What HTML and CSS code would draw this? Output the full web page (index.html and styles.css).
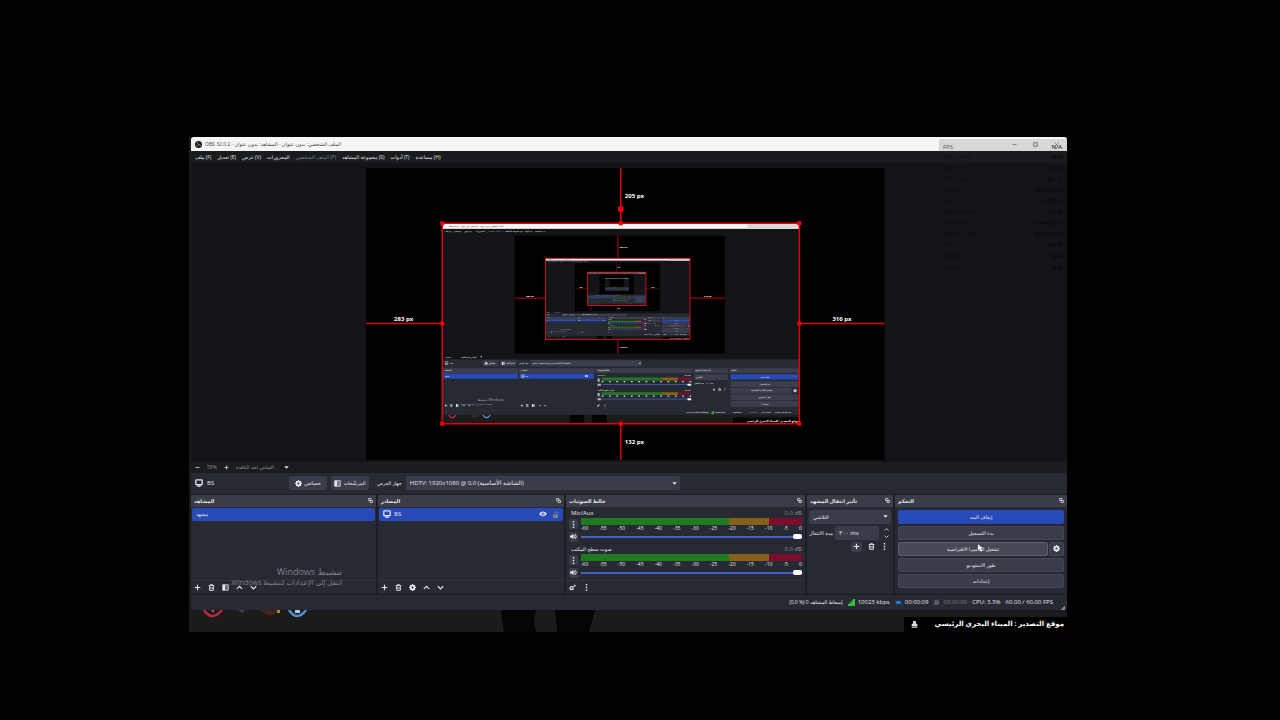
FILE: index.html
```html
<!DOCTYPE html>
<html lang="ar">
<head>
    <meta charset="UTF-8">
    <meta name="viewport" content="width=device-width, initial-scale=1.0">
    <title>OBS 32.0.2</title>
    <link rel="stylesheet" href="styles.css">
</head>
<body>

    <!-- Shared icons -->
    <svg class="defs" width="0" height="0" aria-hidden="true">
        <defs>
            <symbol id="i-plus" viewBox="0 0 10 10"><path d="M5 1v8M1 5h8" stroke="currentColor" stroke-width="1.6"/></symbol>
            <symbol id="i-minus" viewBox="0 0 10 10"><path d="M1 5h8" stroke="currentColor" stroke-width="1.6"/></symbol>
            <symbol id="i-trash" viewBox="0 0 10 10"><path d="M1 2.2h8M3.6 2V.8h2.8V2M2 2.4l.3 6.8h5.4L8 2.4M4 4v3.6M6 4v3.6" fill="none" stroke="currentColor" stroke-width="1.2"/></symbol>
            <symbol id="i-filter" viewBox="0 0 10 10"><path d="M1 1h8v8H1z" fill="none" stroke="currentColor"/><path d="M5 1h4v8H5z" fill="currentColor" opacity=".35"/><path d="M1 1h3.6v8H1z" fill="currentColor"/></symbol>
            <symbol id="i-up" viewBox="0 0 10 10"><path d="M1.2 7L5 3.2 8.8 7" fill="none" stroke="currentColor" stroke-width="1.6"/></symbol>
            <symbol id="i-down" viewBox="0 0 10 10"><path d="M1.2 3.2L5 7l3.8-3.8" fill="none" stroke="currentColor" stroke-width="1.6"/></symbol>
            <symbol id="i-gear" viewBox="0 0 10 10"><circle cx="5" cy="5" r="2.8" fill="none" stroke="currentColor" stroke-width="2.6"/><path d="M5 0v2M5 8v2M0 5h2M8 5h2M1.5 1.5l1.4 1.4M7.1 7.1l1.4 1.4M1.5 8.5l1.4-1.4M7.1 2.9l1.4-1.4" stroke="currentColor" stroke-width="1.6"/></symbol>
            <symbol id="i-dots" viewBox="0 0 10 10"><path d="M4 0h2v2H4zM4 4h2v2H4zM4 8h2v2H4z" fill="currentColor"/></symbol>
            <symbol id="i-tri" viewBox="0 0 10 10"><path d="M.5 2.5h9L5 7.5z" fill="currentColor"/></symbol>
            <symbol id="i-monitor" viewBox="0 0 10 10"><rect x="1" y="1.2" width="8" height="6" rx="1" fill="none" stroke="currentColor" stroke-width="1.6"/><path d="M3 9h4" stroke="currentColor" stroke-width="1.6"/></symbol>
            <symbol id="i-eye" viewBox="0 0 10 10"><path d="M0 5Q5-1 10 5 5 11 0 5z" fill="currentColor"/><circle cx="5" cy="5" r="2" fill="#284ab8"/><circle cx="5" cy="5" r="1" fill="currentColor"/></symbol>
            <symbol id="i-lock" viewBox="0 0 10 10"><rect x="1.5" y="5" width="7" height="5" fill="currentColor"/><path d="M4 5V3a2 2 0 0 1 4 0v2" fill="none" stroke="currentColor" stroke-width="1.2"/></symbol>
            <symbol id="i-float" viewBox="0 0 10 10"><path d="M1 1h5v4H1zM4 5h5v4H4z" fill="none" stroke="currentColor" stroke-width="1.4"/></symbol>
            <symbol id="i-speaker" viewBox="0 0 10 10"><path d="M0 3.5h2L5 1v8L2 6.5H0z" fill="currentColor"/><path d="M6 3q1.6 2 0 4M7.5 1.5q3 3.5 0 7" fill="none" stroke="currentColor" stroke-width="1.2"/></symbol>
            <symbol id="i-gears" viewBox="0 0 10 10"><circle cx="3.8" cy="6" r="2.2" fill="none" stroke="currentColor" stroke-width="1.8"/><circle cx="8" cy="2.5" r="1" fill="none" stroke="currentColor" stroke-width="1.4"/></symbol>

            <!-- One captured desktop, reused for every level of the mirror -->
            <symbol id="desk" viewBox="0 0 878 495" preserveAspectRatio="none">
                <rect width="878" height="495" fill="#1b1b1b"/>
                <path d="M314 473h35v22h-35zM368 473h36v22h-36z" fill="#000"/>
                <g fill="none" stroke-width="3"><path d="M16 473q9 14 18 0" stroke="#c22a45"/><path d="M100 473q9 14 18 0" stroke="#5a92dc"/><path d="M73 476h16" stroke="#6b2e1a"/></g>
                <rect x="1" width="877" height="473" fill="#272a33"/>
                <rect x="1" y="14" width="877" height="322" fill="#121418"/>
                <rect x="1" width="877" height="14" fill="#f4f4f4"/>
                <rect x="750" y="2" width="126" height="12" fill="#d8d8d8"/>
                <rect x="178" y="31" width="517" height="291" fill="#000"/>
                <g fill="#3c3f4b">
                    <path d="M100 338h38v15h-38zM142 338h40v15h-40zM217 338h274v15H217z"/>
                    <path d="M2 358h185v12H2zM189 358h185v12H189zM377 358h238v12H377zM618 358h85v12h-85zM706 358h171v12H706z"/>
                    <path d="M709 390h166v14H709zM709 406h150v14H709zM709 423h166v14H709zM709 439h166v14H709zM620 373h82v14h-82z"/>
                </g>
                <path d="M3 371h183v13H3zM190 371h183v13H190zM709 373h166v13H709z" fill="#284ab8"/>
                <g id="desk-meter">
                    <path d="M392 381h148v7H392z" fill="#1f7a22"/><path d="M540 381h40v7h-40z" fill="#84601a"/><path d="M580 381h32v7h-32z" fill="#7a0d2b"/>
                    <path d="M392 391h220" stroke="#ddd" stroke-width="3" stroke-dasharray="4 14"/>
                    <path d="M392 398h220" stroke="#405fc4" stroke-width="2"/><path d="M603 396h9v5h-9z" fill="#fff"/>
                    <path d="M382 383h5v8h-5zM382 396h8v5h-8z" fill="#bbb"/>
                </g>
                <use href="#desk-meter" y="36"/>
                <g color="#fff">
                    <use href="#i-monitor" x="6" y="341" width="9" height="9"/><use href="#i-monitor" x="194" y="373" width="9" height="9"/>
                    <use href="#i-gear" x="104" y="342" width="8" height="8"/><use href="#i-filter" x="146" y="342" width="8" height="8"/>
                    <use href="#i-eye" x="350" y="373" width="9" height="9"/><use href="#i-gear" x="863" y="409" width="9" height="9"/>
                    <g id="desk-tools"><use href="#i-plus" x="5" y="446" width="8" height="8"/><use href="#i-trash" x="18" y="446" width="8" height="8"/><use href="#i-filter" x="33" y="446" width="8" height="8"/><use href="#i-up" x="49" y="446" width="8" height="8"/><use href="#i-down" x="62" y="446" width="8" height="8"/></g>
                    <use href="#desk-tools" x="187"/>
                    <use href="#i-gears" x="380" y="446" width="8" height="8"/><use href="#i-dots" x="396" y="446" width="8" height="8"/>
                    <use href="#i-plus" x="664" y="407" width="8" height="8"/><use href="#i-trash" x="678" y="407" width="8" height="8"/><use href="#i-dots" x="691" y="407" width="8" height="8"/>
                    <use href="#i-tri" x="483" y="343" width="6" height="6"/><use href="#i-tri" x="93" y="327" width="6" height="6"/>
                </g>
                <g class="mini-text">
                    <text x="16" y="9" fill="#333">OBS 32.0.2 - الملف الشخصي: بدون عنوان - المشاهد: بدون عنوان</text>
                    <text x="6" y="23">ملف (F)</text><text x="28" y="23">تعديل (E)</text><text x="54" y="23">عرض (V)</text><text x="82" y="23">المحزورات</text><text x="110" y="23" opacity=".5">الملف الشخصي (P)</text><text x="155" y="23">مجموعة المشاهد (S)</text><text x="202" y="23">أدوات (T)</text><text x="228" y="23">مساعدة (H)</text>
                    <text x="20" y="348">BS</text><text x="114" y="348">خصائص</text><text x="156" y="348">المرشّحات</text><text x="188" y="348">جهاز العرض</text>
                    <text x="221" y="348">HDTV: 1920x1080 @ 0,0 (الشاشة الأساسية)</text>
                    <text x="6" y="332">−  58%  +</text><text x="46" y="332">القياس لحد النافذة</text>
                    <text x="6" y="366">المشاهد</text><text x="193" y="366">المصادر</text><text x="381" y="366">خالط الصوتيات</text><text x="622" y="366">تأثير انتقال المشهد</text><text x="710" y="366">التحكم</text>
                    <text x="6" y="380">مشهد</text><text x="205" y="380">BS</text>
                    <text x="382" y="378">Mic/Aux</text><text x="382" y="414">صوت سطح المكتب</text><text x="596" y="378">0.0 dB</text><text x="596" y="414">0.0 dB</text>
                    <text x="624" y="382">التلاشي</text><text x="620" y="398">مدة الانتقال</text><text x="650" y="398">٣٠٠ ms</text>
                    <text x="782" y="382">إيقاف البث</text><text x="781" y="399">بدء التسجيل</text><text x="759" y="415">تشغيل الكاميرا الافتراضية</text><text x="778" y="432">طور الاستوديو</text><text x="785" y="448">إعدادات</text>
                    <text x="601" y="468">(0.0 %) 0 إسقاط المشاهد</text><text x="669" y="468">10023 kbps</text><text x="716" y="468">00:00:09</text><text x="755" y="468" opacity=".4">00:00:00</text><text x="785" y="468">CPU: 3.3%</text><text x="818" y="468">60.00 / 60.00 FPS</text>
                    <text x="87" y="439" opacity=".5" font-size="9">تنشيط Windows</text>
                    <text x="45" y="449" opacity=".5">انتقل إلى الإعدادات لتنشيط Windows</text>
                </g>
                <path d="M660 470h8v-8z" fill="#2fc437"/>
                <rect x="715" y="480" width="163" height="15" fill="#000"/>
                <text x="748" y="490" class="mini-banner">موقع التصدير : الميناء البحري الرئيسي</text>
                <path d="M432 31v55M432 286v36M178 185h76M610 185h85" stroke="#f0000c" stroke-width="2"/>
                <g class="guide-text"><text x="436" y="62">205 px</text><text x="436" y="308">132 px</text><text x="206" y="183">283 px</text><text x="643" y="183">316 px</text></g>
            </symbol>
        </defs>
    </svg>

    <main class="desktop">
        <div class="window">
            <!-- Title bar -->
            <header class="titlebar">
                <svg class="logo" viewBox="0 0 10 10"><circle cx="5" cy="5" r="5" fill="#16171a"/><path d="M5 5Q3 4 4 1.5M5 5q2.2-.3 3.3 2M5 5Q4.2 7 1.8 7" fill="none" stroke="#aaa" stroke-width="1.2"/></svg>
                <span class="title">OBS 32.0.2 - الملف الشخصي: بدون عنوان - المشاهد: بدون عنوان</span>
                <button class="win-button" aria-label="Minimize"><svg viewBox="0 0 10 10"><path d="M1 5h8" stroke="#444"/></svg></button>
                <button class="win-button" aria-label="Maximize"><svg viewBox="0 0 10 10"><path d="M1.5 1.5h7v7h-7z" fill="none" stroke="#444" stroke-width="1.2"/></svg></button>
                <button class="win-button" aria-label="Close"><svg viewBox="0 0 10 10"><path d="M1 1l8 8M9 1L1 9" stroke="#555"/></svg></button>
            </header>

            <!-- Menu -->
            <nav class="menu">
                <a href="#">ملف (F)</a>
                <a href="#">تعديل (E)</a>
                <a href="#">عرض (V)</a>
                <a href="#">المحزورات</a>
                <a href="#" class="off">الملف الشخصي (P)</a>
                <a href="#">مجموعة المشاهد (S)</a>
                <a href="#">أدوات (T)</a>
                <a href="#">مساعدة (H)</a>
            </nav>

            <!-- Preview -->
            <section class="preview">
                <svg class="canvas" viewBox="0 0 517 291">
                    <rect width="517" height="291" fill="#000"/>
                    <use href="#desk" x="76" y="55" width="356" height="200"/>
                    <use href="#desk" x="179" y="90" width="144" height="81"/>
                    <use href="#desk" x="221" y="104" width="58" height="33"/>
                    <use href="#desk" x="238" y="110" width="24" height="13"/>
                    <path d="M179 90h144v81H179zM221 104h58v33h-58z" fill="none" stroke="#c8101c"/>
                    <path d="M254 0v55M254 255v36M0 155h76M432 155h85M76 55h356v200H76z" fill="none" stroke="#e0000c" stroke-width="1.5"/>
                    <g fill="#f0000c"><circle cx="254" cy="41" r="3"/><path d="M74 53h4v4h-4zM252 53h4v4h-4zM430 53h4v4h-4zM74 153h4v4h-4zM430 153h4v4h-4zM74 253h4v4h-4zM252 253h4v4h-4zM430 253h4v4h-4z"/></g>
                    <g class="guide-text">
                        <text x="258" y="30">205 px</text>
                        <text x="258" y="275">132 px</text>
                        <text x="28" y="153">283 px</text>
                        <text x="465" y="153">316 px</text>
                    </g>
                </svg>
            </section>

            <div class="zoombar">
                <button class="bare" aria-label="Zoom out"><svg class="icon xs"><use href="#i-minus"/></svg></button>
                <span>58%</span>
                <button class="bare" aria-label="Zoom in"><svg class="icon xs"><use href="#i-plus"/></svg></button>
                <span class="fit">القياس لحد النافذة</span>
                <svg class="icon xs"><use href="#i-tri"/></svg>
            </div>

            <!-- Selected source toolbar -->
            <div class="source-bar">
                <svg class="icon lg"><use href="#i-monitor"/></svg>
                <span class="source-name">BS</span>
                <button class="btn"><svg class="icon"><use href="#i-gear"/></svg>خصائص</button>
                <button class="btn"><svg class="icon"><use href="#i-filter"/></svg>المرشّحات</button>
                <label for="display">جهاز العرض</label>
                <span class="select display">
                    <select id="display"><option>HDTV: 1920x1080 @ 0,0 (الشاشة الأساسية)</option></select>
                    <svg class="icon xs"><use href="#i-tri"/></svg>
                </span>
            </div>

            <!-- Docks -->
            <div class="docks">
                <section class="dock">
                    <h2>المشاهد <svg class="icon xs"><use href="#i-float"/></svg></h2>
                    <ul class="list"><li class="scene">مشهد</li></ul>
                    <div class="tools">
                        <button class="bare" aria-label="Add scene"><svg class="icon"><use href="#i-plus"/></svg></button>
                        <button class="bare" aria-label="Remove scene"><svg class="icon"><use href="#i-trash"/></svg></button>
                        <button class="bare" aria-label="Scene filters"><svg class="icon"><use href="#i-filter"/></svg></button>
                        <button class="bare" aria-label="Move scene up"><svg class="icon"><use href="#i-up"/></svg></button>
                        <button class="bare" aria-label="Move scene down"><svg class="icon"><use href="#i-down"/></svg></button>
                    </div>
                    <div class="watermark" dir="rtl">
                        <p class="big">تنشيط Windows</p>
                        <p>انتقل إلى الإعدادات لتنشيط Windows.</p>
                    </div>
                </section>

                <section class="dock">
                    <h2>المصادر <svg class="icon xs"><use href="#i-float"/></svg></h2>
                    <ul class="list">
                        <li><svg class="icon lg"><use href="#i-monitor"/></svg> BS <svg class="icon lg end"><use href="#i-eye"/></svg><svg class="icon dim"><use href="#i-lock"/></svg></li>
                    </ul>
                    <div class="tools">
                        <button class="bare" aria-label="Add source"><svg class="icon"><use href="#i-plus"/></svg></button>
                        <button class="bare" aria-label="Remove source"><svg class="icon"><use href="#i-trash"/></svg></button>
                        <button class="bare" aria-label="Source properties"><svg class="icon"><use href="#i-gear"/></svg></button>
                        <button class="bare" aria-label="Move source up"><svg class="icon"><use href="#i-up"/></svg></button>
                        <button class="bare" aria-label="Move source down"><svg class="icon"><use href="#i-down"/></svg></button>
                    </div>
                </section>

                <section class="dock mixer">
                    <h2>خالط الصوتيات <svg class="icon xs"><use href="#i-float"/></svg></h2>
                    <div class="channels">
                        <div class="channel">
                            <div class="channel-head"><label for="mic">Mic/Aux</label><span>0.0 dB</span></div>
                            <button class="square" aria-label="Mic/Aux options"><svg class="icon"><use href="#i-dots"/></svg></button>
                            <div class="level">
                                <div class="meter"></div>
                                <div class="scale"><span>-60</span><span>-55</span><span>-50</span><span>-45</span><span>-40</span><span>-35</span><span>-30</span><span>-25</span><span>-20</span><span>-15</span><span>-10</span><span>-5</span><span>0</span></div>
                            </div>
                            <button class="square" aria-label="Mute Mic/Aux"><svg class="icon"><use href="#i-speaker"/></svg></button>
                            <input id="mic" type="range" min="0" max="100" value="100">
                        </div>
                        <div class="channel">
                            <div class="channel-head arabic"><label for="desktop-audio">صوت سطح المكتب</label><span>0.0 dB</span></div>
                            <button class="square" aria-label="Desktop audio options"><svg class="icon"><use href="#i-dots"/></svg></button>
                            <div class="level">
                                <div class="meter"></div>
                                <div class="scale"><span>-60</span><span>-55</span><span>-50</span><span>-45</span><span>-40</span><span>-35</span><span>-30</span><span>-25</span><span>-20</span><span>-15</span><span>-10</span><span>-5</span><span>0</span></div>
                            </div>
                            <button class="square" aria-label="Mute desktop audio"><svg class="icon"><use href="#i-speaker"/></svg></button>
                            <input id="desktop-audio" type="range" min="0" max="100" value="100">
                        </div>
                    </div>
                    <div class="tools">
                        <button class="bare" aria-label="Advanced audio"><svg class="icon"><use href="#i-gears"/></svg></button>
                        <button class="bare" aria-label="Mixer menu"><svg class="icon"><use href="#i-dots"/></svg></button>
                    </div>
                </section>

                <section class="dock transitions">
                    <h2>تأثير انتقال المشهد <svg class="icon xs"><use href="#i-float"/></svg></h2>
                    <div class="fields">
                        <span class="select">
                            <select class="arabic" aria-label="تأثير انتقال المشهد"><option>التلاشي</option></select>
                            <svg class="icon xs"><use href="#i-tri"/></svg>
                        </span>
                        <div class="duration">
                            <label for="duration">مدة الانتقال</label>
                            <input id="duration" type="text" value="٣٠٠ ms">
                            <span class="spin">
                                <button class="bare" aria-label="Longer"><svg class="icon xs"><use href="#i-up"/></svg></button>
                                <button class="bare" aria-label="Shorter"><svg class="icon xs"><use href="#i-down"/></svg></button>
                            </span>
                        </div>
                        <div class="transition-tools">
                            <button class="square" aria-label="Add transition"><svg class="icon"><use href="#i-plus"/></svg></button>
                            <button class="bare" aria-label="Remove transition"><svg class="icon"><use href="#i-trash"/></svg></button>
                            <button class="bare" aria-label="Transition menu"><svg class="icon"><use href="#i-dots"/></svg></button>
                        </div>
                    </div>
                </section>

                <section class="dock controls">
                    <h2>التحكم <svg class="icon xs"><use href="#i-float"/></svg></h2>
                    <div class="buttons">
                        <button class="btn active">إيقاف البث</button>
                        <button class="btn">بدء التسجيل</button>
                        <div class="split">
                            <button class="btn hover">تشغيل الكاميرا الافتراضية</button>
                            <button class="btn" aria-label="Virtual camera settings"><svg class="icon"><use href="#i-gear"/></svg></button>
                            <svg class="cursor" viewBox="0 0 6 9"><path d="M0 0v7l2-1.5L3.5 9 5 8.2 3.5 5.2H6z" fill="#fff"/></svg>
                        </div>
                        <button class="btn">طور الاستوديو</button>
                        <button class="btn">إعدادات</button>
                    </div>
                </section>
            </div>

            <!-- Status bar -->
            <footer class="status">
                <span class="arabic">(0.0 %) 0 إسقاط المشاهد</span>
                <span><svg class="icon" viewBox="0 0 10 10"><path d="M0 7h2v3H0zM2 5h3v5H2zM5 2h2v8H5zM7 0h3v10H7z" fill="#2fc437"/></svg>10023 kbps</span>
                <span><svg class="icon" viewBox="0 0 10 10"><path d="M1 2h8v6H1z" fill="#1c4c86"/><path d="M2 5h6" stroke="#4c95dc" stroke-width="2"/></svg>00:00:09</span>
                <span class="off"><svg class="icon" viewBox="0 0 10 10"><circle cx="5" cy="5" r="4" fill="#555962"/></svg>00:00:00</span>
                <span>CPU: 3.3%</span>
                <span>60.00 / 60.00 FPS</span>
                <svg class="icon xs grip" viewBox="0 0 10 10"><path d="M10 1v9H1z" fill="#868a94"/></svg>
            </footer>

            <!-- Performance overlay -->
            <dl class="stats">
                <div class="first"><dt>FPS</dt><dd>N/A</dd></div>
                <div><dt>CPU Clock</dt><dd>N/A</dd></div>
                <div><dt>GPU Util</dt><dd>57 %</dd></div>
                <div><dt>CPU Temp</dt><dd>42 °C</dd></div>
                <div><dt>Clock</dt><dd>1800 MHz</dd></div>
                <div><dt>Volt</dt><dd>1.005 V</dd></div>
                <div><dt>GPU Power</dt><dd>47 W</dd></div>
                <div><dt>CPU Freq</dt><dd>5084 MHz</dd></div>
                <div><dt>Memory Clk</dt><dd>5001 MHz</dd></div>
                <div><dt>CPU Util</dt><dd>40 %</dd></div>
                <div><dt>VRAM</dt><dd>N/A</dd></div>
                <div><dt>Latency</dt><dd>N/A</dd></div>
            </dl>
        </div>

        <!-- Strip of the desktop under the window -->
        <div class="wallpaper">
            <svg class="shortcuts" viewBox="0 0 110 10">
                <path d="M3 0q8 12 18 0" fill="none" stroke="#b92a43" stroke-width="2.5"/>
                <path d="M10 0h4l-2 3z" fill="#c8434f"/>
                <path d="M37 0h7l-3 3z" fill="#31464a"/>
                <path d="M60 0h18q-8 11-18 0z" fill="#43231b"/><path d="M76 0h3v3h-3z" fill="#b98e18"/>
                <path d="M88 0q8 12 17 0" fill="none" stroke="#568bd0" stroke-width="2.5"/><path d="M94 0h5v3h-5z" fill="#a8c7ee"/>
            </svg>
            <svg class="figure" viewBox="0 0 94 22"><path d="M0 0h35l-2 11 2 11H3zM54 0h40l-6 22H56z" fill="#040404"/></svg>
            <div class="banner">
                <svg class="icon" viewBox="0 0 10 10"><path d="M3 0h4v4h2v4H1V4h2zM1 9h8v1H1z" fill="#ddd"/></svg>
                <span>موقع التصدير : الميناء البحري الرئيسي</span>
            </div>
        </div>
    </main>

</body>
</html>
```
FILE: styles.css
```css
* {
    box-sizing: border-box;
}

body {
    margin: 0;
    padding-top: 137px;
    background-color: #000000;
    color: #e6e6ea;
    font-family: "Open Sans", "DejaVu Sans", sans-serif;
    font-size: 6px;
    line-height: 8px;
}

h2, p, ul, dl, dd {
    margin: 0;
    padding: 0;
}

a {
    color: inherit;
    text-decoration: none;
}

button, input, select {
    margin: 0;
    padding: 0;
    border: none;
    background: none;
    color: inherit;
    font: inherit;
}

.defs {
    position: absolute;
}

.desktop {
    width: 69%;
    max-width: 878px;
    margin-left: calc(15% - 3px);
    background-color: #1b1b1b;
}

.window {
    position: relative;
    margin-left: 2px;
    background-color: #272a33;
    border-radius: 3px;
    overflow: hidden;
}

.icon {
    width: 7px;
    height: 7px;
    flex: none;
}

.icon.xs {
    width: 5px;
    height: 5px;
}

.icon.lg {
    width: 8px;
    height: 8px;
}

.dim, .off {
    color: #7d808a;
}

.bare {
    display: flex;
    align-items: center;
    justify-content: center;
}

/* Title bar and menu */
.titlebar {
    display: flex;
    align-items: center;
    height: 14px;
    padding-left: 4px;
    background-color: #f5f5f5;
    color: #444444;
    font-size: 5px;
}

.logo {
    width: 7px;
    height: 7px;
    margin-right: 3px;
}

.title {
    flex: 1;
}

.win-button {
    display: flex;
    justify-content: center;
    width: 21px;
}

.win-button svg {
    width: 5px;
    height: 5px;
}

.menu {
    display: flex;
    align-items: center;
    gap: 6px;
    height: 12px;
    padding: 0 4px;
    background-color: #191b1f;
    font-size: 5px;
}

/* Preview */
.preview {
    padding: 5px 0 2px 20%;
    background-color: #121418;
}

.canvas {
    display: block;
    width: 74%;
}

.guide-text {
    fill: #ffffff;
    font: bold 6px "Open Sans", sans-serif;
}

.mini-text {
    fill: #ffffff;
    font-size: 5px;
}

.mini-banner {
    fill: #ffffff;
    font-size: 7px;
    font-weight: bold;
}

.zoombar {
    display: flex;
    align-items: center;
    gap: 7px;
    height: 11px;
    padding: 0 4px;
    background-color: #1b1c20;
    color: #8c8f96;
    font-size: 5px;
}

.zoombar svg {
    color: #dddddd;
}

.fit {
    width: 41px;
}

/* Source toolbar */
.source-bar {
    display: flex;
    align-items: center;
    gap: 4px;
    height: 21px;
    padding: 0 4px;
}

.source-name {
    width: 78px;
}

.btn {
    display: flex;
    align-items: center;
    justify-content: center;
    gap: 2px;
    height: 14px;
    background-color: #3a3d49;
    border-radius: 2px;
    font-size: 5px;
}

.source-bar .btn {
    width: 38px;
}

.source-bar label {
    margin-left: 4px;
    font-size: 5px;
}

.select {
    display: grid;
    align-items: center;
    height: 14px;
    background-color: #3a3d49;
    border-radius: 2px;
}

.select select {
    grid-area: 1 / 1;
    width: 100%;
    height: 14px;
    padding: 0 4px;
    appearance: none;
}

.select .icon {
    grid-area: 1 / 1;
    justify-self: end;
    margin-right: 3px;
    pointer-events: none;
}

.display {
    width: 274px;
}

.select .arabic,
.arabic {
    font-size: 5px;
}

/* Docks */
.docks {
    display: grid;
    grid-template-columns: 185fr 186fr 239fr 86fr 172fr;
    gap: 2px;
    padding-top: 1px;
    background-color: #1c1e25;
}

.dock {
    position: relative;
    display: flex;
    flex-direction: column;
    min-width: 0;
    background-color: #272a33;
}

.dock h2 {
    display: flex;
    align-items: center;
    justify-content: space-between;
    height: 12px;
    padding: 0 3px;
    background-color: #3a3d47;
    font-size: 5px;
    font-weight: bold;
    white-space: nowrap;
}

.list {
    flex: 1;
    padding: 1px;
    list-style: none;
}

.list li {
    display: flex;
    align-items: center;
    gap: 3px;
    height: 13px;
    padding: 0 4px;
    background-color: #284ab8;
    border-radius: 2px;
}

.list .scene {
    font-size: 5px;
}

.list .end {
    margin-left: auto;
    margin-right: 2px;
}

.tools {
    display: flex;
    align-items: center;
    gap: 7px;
    height: 14px;
    padding: 0 3px;
    border-top: 1px solid #31343f;
}

.watermark {
    position: absolute;
    right: 34px;
    bottom: 7px;
    color: #7d8088;
    font-size: 7px;
    line-height: 9px;
    white-space: nowrap;
}

.watermark .big {
    font-size: 9px;
    line-height: 12px;
}

/* Mixer */
.channels {
    flex: 1;
    padding: 1px 3px 0;
}

.channel {
    display: grid;
    grid-template-columns: 9px 1fr;
    grid-template-rows: 8px 13px 10px;
    gap: 1px 3px;
    align-items: center;
    height: 36px;
    padding-top: 1px;
}

.channel-head {
    grid-column: 1 / 3;
    display: flex;
    justify-content: space-between;
    padding-left: 2px;
}

.channel-head span {
    color: #8b8e98;
    font-size: 6px;
}

.square {
    display: flex;
    align-items: center;
    justify-content: center;
    height: 10px;
    background-color: #3a3d49;
    border-radius: 2px;
}

.meter {
    height: 7px;
    background: linear-gradient(to right, #1f7a22 67%, #84601a 67% 85%, #7a0d2b 85%);
}

.scale {
    display: flex;
    justify-content: space-between;
    font-size: 5px;
    line-height: 6px;
}

input[type="range"] {
    width: 100%;
    height: 8px;
    appearance: none;
}

input[type="range"]::-webkit-slider-runnable-track {
    height: 2px;
    background-color: #4463c8;
}

input[type="range"]::-webkit-slider-thumb {
    width: 9px;
    height: 5px;
    margin-top: -2px;
    appearance: none;
    background-color: #ffffff;
    border-radius: 2px;
}

/* Transitions */
.fields {
    display: flex;
    flex-direction: column;
    gap: 2px;
    padding: 3px 2px;
}

.duration {
    display: flex;
    align-items: center;
    gap: 2px;
    white-space: nowrap;
}

.duration label {
    font-size: 5px;
}

.duration input {
    flex: 1;
    min-width: 0;
    height: 14px;
    padding-left: 4px;
    background-color: #3a3d49;
    border-radius: 2px;
}

.spin {
    display: flex;
    flex-direction: column;
    gap: 2px;
    width: 10px;
}

.transition-tools {
    display: flex;
    justify-content: flex-end;
    gap: 6px;
    padding-right: 3px;
}

.transition-tools .square {
    width: 11px;
}

/* Controls */
.buttons {
    display: flex;
    flex-direction: column;
    gap: 2px;
    padding: 3px 3px 0;
}

.buttons .btn {
    border: 1px solid #444753;
}

.buttons .active {
    background-color: #284ab8;
    border-color: #284ab8;
}

.buttons .hover {
    border-color: #5c606c;
    background-color: #454855;
}

.split {
    position: relative;
    display: grid;
    grid-template-columns: 1fr 15px;
    gap: 1px;
}

.cursor {
    position: absolute;
    left: 48%;
    top: 2px;
    width: 5px;
    height: 8px;
}

/* Status bar */
.status {
    display: flex;
    align-items: center;
    justify-content: flex-end;
    gap: 5px;
    height: 16px;
    padding: 0 2px;
    border-top: 1px solid #1c1e25;
}

.status span {
    display: flex;
    align-items: center;
    gap: 3px;
}

.grip {
    align-self: flex-end;
    margin-left: 2px;
}

/* Faded statistics over the right side of the window */
.stats {
    position: absolute;
    top: 2px;
    right: 0;
    width: 128px;
    color: #050607;
}

.stats div {
    display: flex;
    justify-content: space-between;
    height: 11px;
    padding: 2px 5px 0 4px;
}

.stats dt {
    color: #0b0c0e;
}

.stats .first {
    height: 12px;
    padding-top: 4px;
    background-color: rgba(0, 0, 0, 0.12);
}

.stats .first dt {
    color: #555555;
}

/* Desktop strip */
.wallpaper {
    display: flex;
    align-items: flex-end;
    height: 22px;
}

.shortcuts {
    align-self: flex-start;
    width: 110px;
    height: 10px;
    margin-left: 12px;
}

.figure {
    width: 94px;
    height: 22px;
    margin-left: 190px;
}

.banner {
    display: flex;
    align-items: center;
    justify-content: space-between;
    width: 163px;
    height: 15px;
    margin-left: auto;
    padding: 0 3px 0 7px;
    background-color: #000000;
    color: #ffffff;
    font-size: 7px;
    font-weight: bold;
    white-space: nowrap;
}
```
